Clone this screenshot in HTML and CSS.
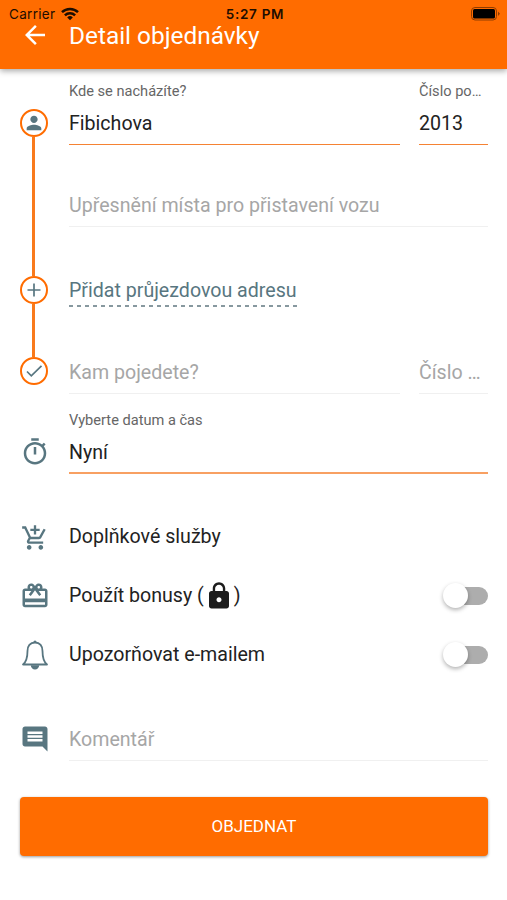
FILE: index.html
```
<!DOCTYPE html>
<html lang="cs">
<head>
    <meta charset="UTF-8">
    <meta name="viewport" content="width=device-width, initial-scale=1.0">
    <title>Detail objednávky</title>
    <link rel="stylesheet" href="styles.css">
</head>
<body>
    <header class="header">
        <div class="status-bar">
            <div class="carrier">
                <span>Carrier</span>
                <svg width="18" height="14" viewBox="0 0 18 14" fill="none" stroke="#1d0d00" stroke-width="2.5">
                    <path d="M1 5.2a11.4 11.4 0 0 1 16 0"/>
                    <path d="M3.9 8.3a7.3 7.3 0 0 1 10.2 0"/>
                    <path d="M9 13.2L6.2 10.4a4 4 0 0 1 5.6 0z" fill="#1d0d00" stroke="none"/>
                </svg>
            </div>
            <div class="time">5:27 PM</div>
            <svg class="battery" width="30" height="14" viewBox="0 0 30 14">
                <rect x="0.5" y="0.5" width="25" height="12.5" rx="3.5" fill="none" stroke="#8f3c00"/>
                <rect x="2" y="2" width="22" height="9.5" rx="1.5" fill="#000"/>
                <path d="M27 4.5v4.5l2-2.2z" fill="#8f3c00"/>
            </svg>
        </div>
        <div class="title-bar">
            <svg width="30" height="30" viewBox="0 0 24 24" fill="#fff">
                <path d="M20 11H7.83l5.59-5.59L12 4l-8 8 8 8 1.41-1.41L7.83 13H20z"/>
            </svg>
            <h1>Detail objednávky</h1>
        </div>
    </header>

    <main class="form">
        <section class="route">
            <div class="rail">
                <div class="stop">
                    <svg width="22" height="22" viewBox="0 0 24 24" fill="#587680">
                        <path d="M12 12c2.21 0 4-1.79 4-4s-1.79-4-4-4-4 1.790-4 4 1.790 4 4 4zm0 2c-2.670 0-8 1.340-8 4v2h16v-2c0-2.660-5.330-4-8-4z"/>
                    </svg>
                </div>
                <div class="line line-long"></div>
                <div class="stop">
                    <svg width="22" height="22" viewBox="0 0 22 22" fill="none" stroke="#587680" stroke-width="1.7">
                        <path d="M11 4.500v13M4.500 11h13"/>
                    </svg>
                </div>
                <div class="line"></div>
                <div class="stop">
                    <svg width="22" height="22" viewBox="0 0 22 22" fill="none" stroke="#587680" stroke-width="1.7">
                        <path d="M4 11.500l4.300 4.300L18.500 5.800"/>
                    </svg>
                </div>
            </div>
            <div class="route-fields">
                <div class="address">
                    <div class="field active">
                        <label>Kde se nacházíte?</label>
                        <div class="value">Fibichova</div>
                    </div>
                    <div class="field active number">
                        <label>Číslo po…</label>
                        <div class="value">2013</div>
                    </div>
                </div>
                <div class="field note">
                    <div class="value">Upřesnění místa pro přistavení vozu</div>
                </div>
                <div class="add-row">
                    <a class="add-address">Přidat průjezdovou adresu</a>
                </div>
                <div class="address">
                    <div class="field">
                        <div class="value">Kam pojedete?</div>
                    </div>
                    <div class="field number">
                        <div class="value">Číslo …</div>
                    </div>
                </div>
            </div>
        </section>

        <section class="row date">
            <svg class="icon" width="30" height="30" viewBox="0 0 24 24" fill="#587680">
                <path d="M15 1H9v2h6V1zm-4 13h2V8h-2v6zm8.030-6.610l1.420-1.420c-.43-.51-.9-.99-1.410-1.410l-1.420 1.420C16.070 4.740 14.120 4 12 4c-4.970 0-9 4.030-9 9s4.020 9 9 9 9-4.030 9-9c0-2.120-.74-4.070-1.970-5.610zM12 20c-3.870 0-7-3.130-7-7s3.130-7 7-7 7 3.130 7 7-3.130 7-7 7z"/>
            </svg>
            <div class="field active">
                <label>Vyberte datum a čas</label>
                <div class="value">Nyní</div>
            </div>
        </section>

        <section class="options">
            <div class="row option">
                <svg class="icon cart" width="28" height="28" viewBox="0 0 24 24" fill="#587680">
                    <path d="M11 9h2V6h3V4h-3V1h-2v3H8v2h3v3zm-4 9c-1.100 0-1.990.9-1.990 2S5.900 22 7 22s2-.9 2-2-.9-2-2-2zm10 0c-1.100 0-1.990.9-1.990 2s.89 2 1.990 2 2-.9 2-2-.9-2-2-2zm-9.830-3.250l.03-.12.9-1.630h7.450c.75 0 1.410-.41 1.750-1.030l3.860-7.010L19.420 4h-.01l-1.100 2-2.760 5H8.530l-.13-.27L6.160 6l-.95-2-.94-2H1v2h2l3.600 7.590-1.350 2.450c-.16.28-.25.61-.25.96 0 1.100.9 2 2 2h12v-2H7.420c-.13 0-.25-.11-.25-.25z"/>
                </svg>
                <span>Doplňkové služby</span>
            </div>
            <div class="row option">
                <svg class="icon" width="30" height="30" viewBox="0 0 24 24" fill="#587680">
                    <path d="M20 6h-2.180c.11-.31.18-.65.18-1 0-1.660-1.340-3-3-3-1.050 0-1.960.54-2.500 1.350l-.5.67-.5-.68C10.960 2.540 10.050 2 9 2 7.340 2 6 3.340 6 5c0 .35.07.69.18 1H4c-1.110 0-1.990.89-1.990 2L2 19c0 1.110.89 2 2 2h16c1.110 0 2-.89 2-2V8c0-1.110-.89-2-2-2zm-5-2c.55 0 1 .45 1 1s-.45 1-1 1-1-.45-1-1 .45-1 1-1zM9 4c.55 0 1 .45 1 1s-.45 1-1 1-1-.45-1-1 .45-1 1-1zm11 15H4v-2h16v2zm0-5H4V8h5.080L7 10.830 8.620 12 11 8.760l1-1.360 1 1.360L15.380 12 17 10.830 14.920 8H20v6z"/>
                </svg>
                <span>Použít bonusy (</span>
                <svg class="lock" width="30" height="30" viewBox="0 0 24 24" fill="#1c1c1c">
                    <path d="M18 8h-1V6c0-2.760-2.240-5-5-5S7 3.240 7 6v2H6c-1.100 0-2 .9-2 2v10c0 1.100.9 2 2 2h12c1.100 0 2-.9 2-2V10c0-1.100-.9-2-2-2zm-6 9c-1.100 0-2-.9-2-2s.9-2 2-2 2 .9 2 2-.9 2-2 2zm3.100-9H8.900V6c0-1.710 1.390-3.100 3.100-3.100s3.100 1.390 3.100 3.100v2z"/>
                </svg>
                <span>)</span>
                <div class="switch"></div>
            </div>
            <div class="row option">
                <svg class="icon" width="30" height="30" viewBox="0 0 30 30" fill="none" stroke="#587680" stroke-width="1.8">
                    <path d="M15 2.500c-5 0-7.500 3.600-7.500 8.500 0 7-.8 10.500-4.500 13.500h24c-3.700-3-4.500-6.500-4.500-13.500 0-4.900-2.500-8.500-7.500-8.500z" stroke-linejoin="round"/>
                    <path d="M10.800 25.300h8.400a4.200 4.200 0 0 1-8.400 0z" fill="#587680" stroke="none"/>
                    <path d="M13.400 2.400a1.600 1.800 0 0 1 3.200 0z" fill="#587680" stroke="none"/>
                </svg>
                <span>Upozorňovat e-mailem</span>
                <div class="switch"></div>
            </div>
        </section>

        <section class="row comment">
            <svg class="icon" width="30" height="30" viewBox="0 0 24 24" fill="#587680">
                <path d="M21.990 4c0-1.100-.89-2-1.990-2H4c-1.100 0-2 .9-2 2v12c0 1.100.9 2 2 2h14l4 4-.01-18zM18 14H6v-2h12v2zm0-3H6V9h12v2zm0-3H6V6h12v2z"/>
            </svg>
            <div class="field">
                <div class="value">Komentář</div>
            </div>
        </section>

        <button class="submit">OBJEDNAT</button>
    </main>
</body>
</html>
```
FILE: styles.css
```
* {
    box-sizing: border-box;
}

body {
    margin: 0;
    height: 900px;
    background-color: #fff;
    color: #222;
    font-family: Roboto, sans-serif;
    font-size: 19.6px;
    overflow: hidden;
}

/* Header */
.header {
    height: 69px;
    background-color: #ff6c00;
    box-shadow: 0 2px 6px rgba(0, 0, 0, 0.35);
}

.status-bar {
    display: grid;
    grid-template-columns: 1fr auto 1fr;
    align-items: center;
    height: 20px;
    padding: 7px 6px 0 9px;
    color: #1d0d00;
    font-family: Inter, sans-serif;
    font-size: 13.5px;
    line-height: 14px;
}

.carrier {
    display: flex;
    gap: 6px;
    letter-spacing: 0.3px;
}

.time {
    font-weight: 600;
    letter-spacing: 0.7px;
}

.battery {
    justify-self: end;
}

.title-bar {
    display: flex;
    align-items: center;
    height: 30px;
    padding-left: 20px;
}

.title-bar h1 {
    margin: 0 0 0 19px;
    color: #fff;
    font-size: 24.4px;
    font-weight: 400;
}

/* Form */
.form {
    padding: 0 19px 0 20px;
}

.route {
    display: flex;
    height: 324px;
}

.rail {
    display: flex;
    flex-direction: column;
    align-items: center;
    width: 28px;
    margin-right: 21px;
    padding-top: 40px;
}

.stop {
    display: flex;
    align-items: center;
    justify-content: center;
    width: 28px;
    height: 28px;
    border: 2px solid #ff6c00;
    border-radius: 50%;
    flex-shrink: 0;
}

.line {
    width: 3px;
    height: 53px;
    margin-right: 1px;
    background-color: #f97a1c;
}

.line-long {
    height: 139px;
}

.route-fields {
    flex: 1;
    min-width: 0;
}

.address {
    display: flex;
    gap: 19px;
}

.field {
    flex: 1;
    min-width: 0;
    border-bottom: 1px solid #f0f0f0;
}

.field.number {
    flex: 0 0 69px;
}

.field label {
    display: block;
    padding-top: 13px;
    color: #666;
    font-size: 14.6px;
    line-height: 18px;
    white-space: nowrap;
}

.value {
    height: 33px;
    padding-top: 1px;
    color: #a6a6a6;
    line-height: 24px;
    white-space: nowrap;
}

.active {
    border-bottom: 1px solid #f58233;
}

.active .value {
    height: 44px;
    padding-top: 12px;
    color: #222;
}

.note {
    margin-top: 48px;
}

.add-row {
    height: 133px;
    padding-top: 52px;
}

.add-address {
    display: inline-block;
    height: 28px;
    color: #587680;
    line-height: 24px;
    background: repeating-linear-gradient(90deg, #87989f 0 4px, transparent 4px 8px) 0 100% / 100% 2px no-repeat;
}

.row {
    display: flex;
}

.icon {
    flex-shrink: 0;
    margin-right: 19px;
}

.date {
    height: 114px;
}

.date .field {
    height: 81px;
    border-bottom: 2px solid #f8a062;
}

.date .icon {
    margin-top: 44px;
}

.date label {
    padding-top: 18px;
}

.option {
    align-items: center;
    height: 59px;
}

.cart {
    margin: 2px 20px 0 1px;
}

.lock {
    margin: 0;
}

.switch {
    position: relative;
    width: 42px;
    height: 18px;
    margin-left: auto;
    border-radius: 9px;
    background-color: #adadad;
}

/* Switch knob */
.switch::after {
    content: "";
    position: absolute;
    top: -4px;
    left: -3px;
    width: 25px;
    height: 25px;
    border-radius: 50%;
    background-color: #fff;
    box-shadow: 0 2px 4px rgba(0, 0, 0, 0.3);
}

.comment {
    height: 76px;
    margin-top: 37px;
}

.comment .field {
    height: 40px;
    padding-top: 6px;
}

.comment .icon {
    margin-top: 3px;
}

.submit {
    display: block;
    width: 100%;
    height: 59px;
    padding: 0 0 2px;
    border: none;
    border-radius: 4px;
    background-color: #ff6c00;
    box-shadow: 0 1px 3px rgba(0, 0, 0, 0.4);
    color: #fff;
    font-family: Roboto, sans-serif;
    font-size: 17px;
}
```
